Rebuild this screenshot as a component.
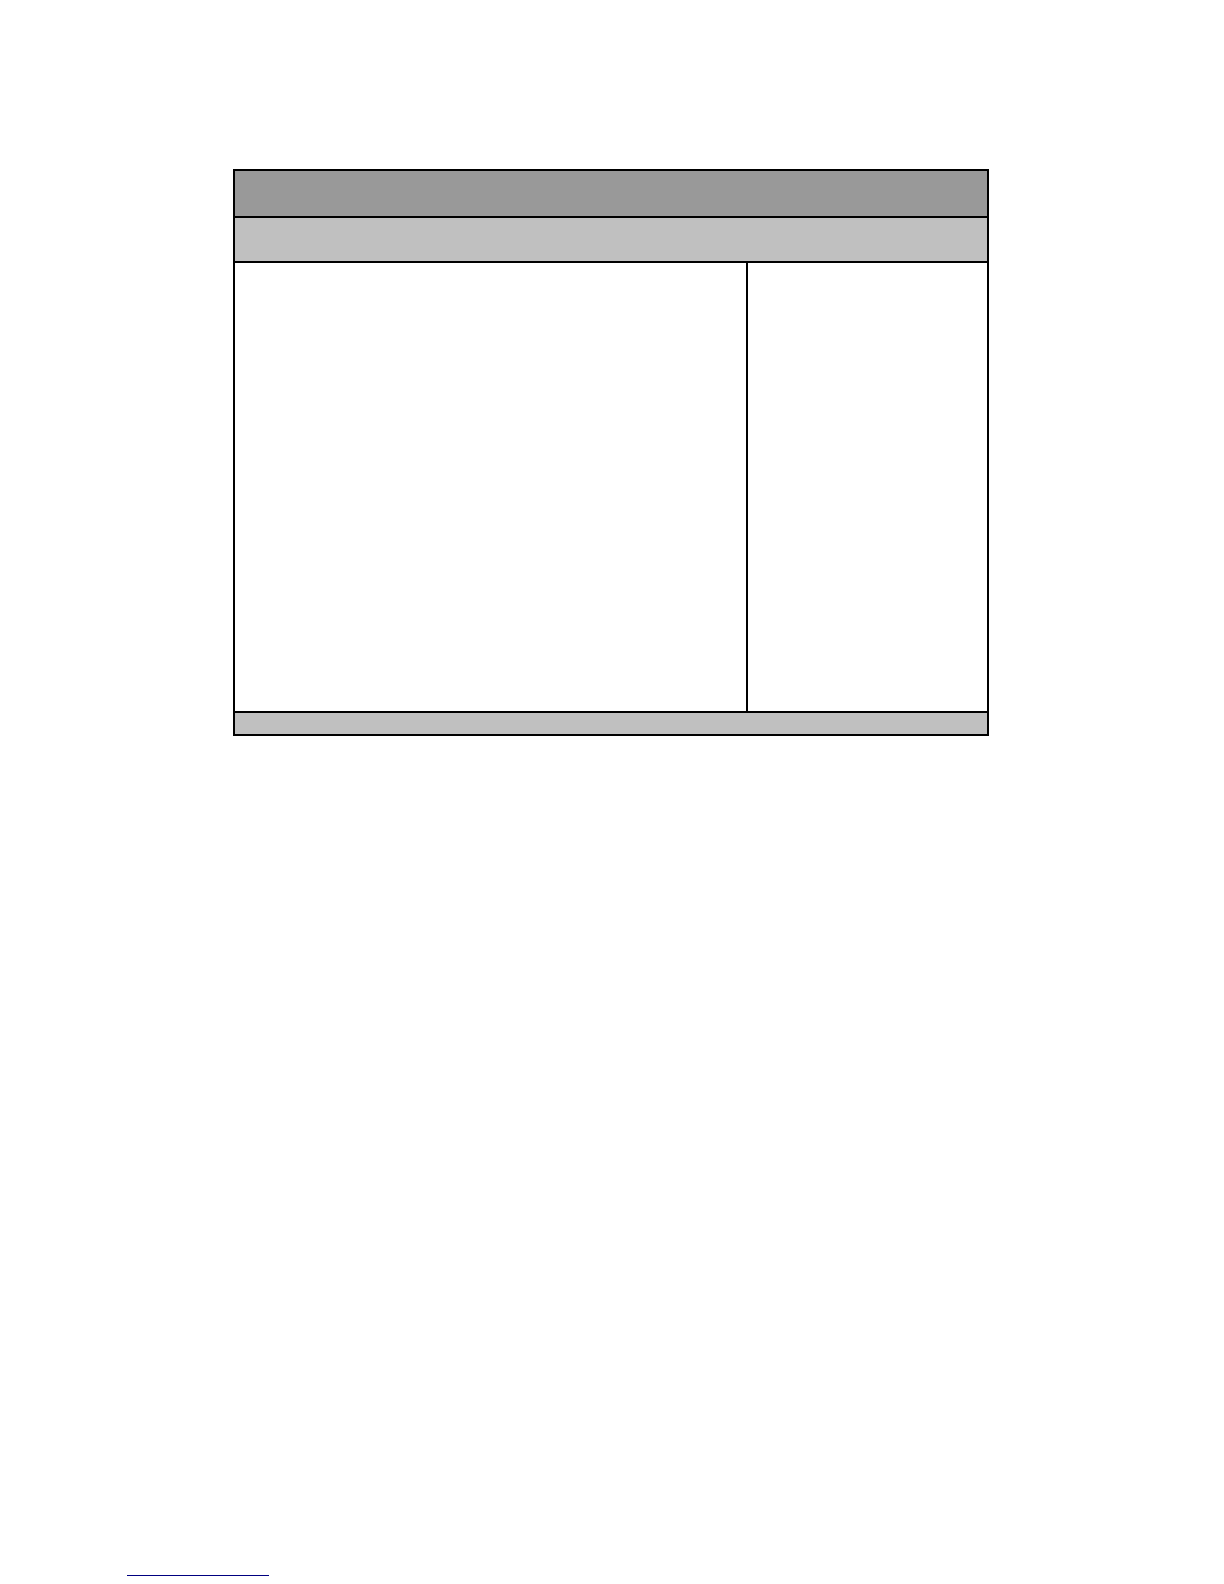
<!--
  Page layout wireframe: header, navigation bar, content with sidebar and footer.
  A short rule closes the page at the bottom.
-->

<div class="page">
	<div class="wireframe">
		<header class="header"></header>
		<nav class="navbar"></nav>
		<div class="body">
			<main class="content"></main>
			<aside class="sidebar"></aside>
		</div>
		<footer class="footer"></footer>
	</div>

	<hr class="note-rule" />
</div>

<style>
	:global(body) {
		margin: 0;
		background: #fff;
	}

	.page {
		--line: 2px solid #000;
		display: flex;
		flex-direction: column;
		justify-content: space-between;
		box-sizing: border-box;
		min-height: 100vh;
		padding: 169px 129px 8px 127px;
	}

	/* Wireframe */
	.wireframe {
		box-sizing: border-box;
		width: 100%;
		max-width: 756px;
		margin: 0 auto;
		border: var(--line);
	}

	.header {
		height: 45px;
		border-bottom: var(--line);
		background: #999;
	}

	.navbar {
		height: 43px;
		border-bottom: var(--line);
		background: #c0c0c0;
	}

	.body {
		display: grid;
		grid-template-columns: 513fr 239fr;
		min-height: 448px;
		border-bottom: var(--line);
	}

	.content {
		border-right: var(--line);
	}

	.footer {
		height: 21px;
		background: #c0c0c0;
	}

	/* Rule at the foot of the page */
	.note-rule {
		width: 142px;
		margin: 0;
		border: 0;
		border-top: 1px solid #000080;
	}
</style>
